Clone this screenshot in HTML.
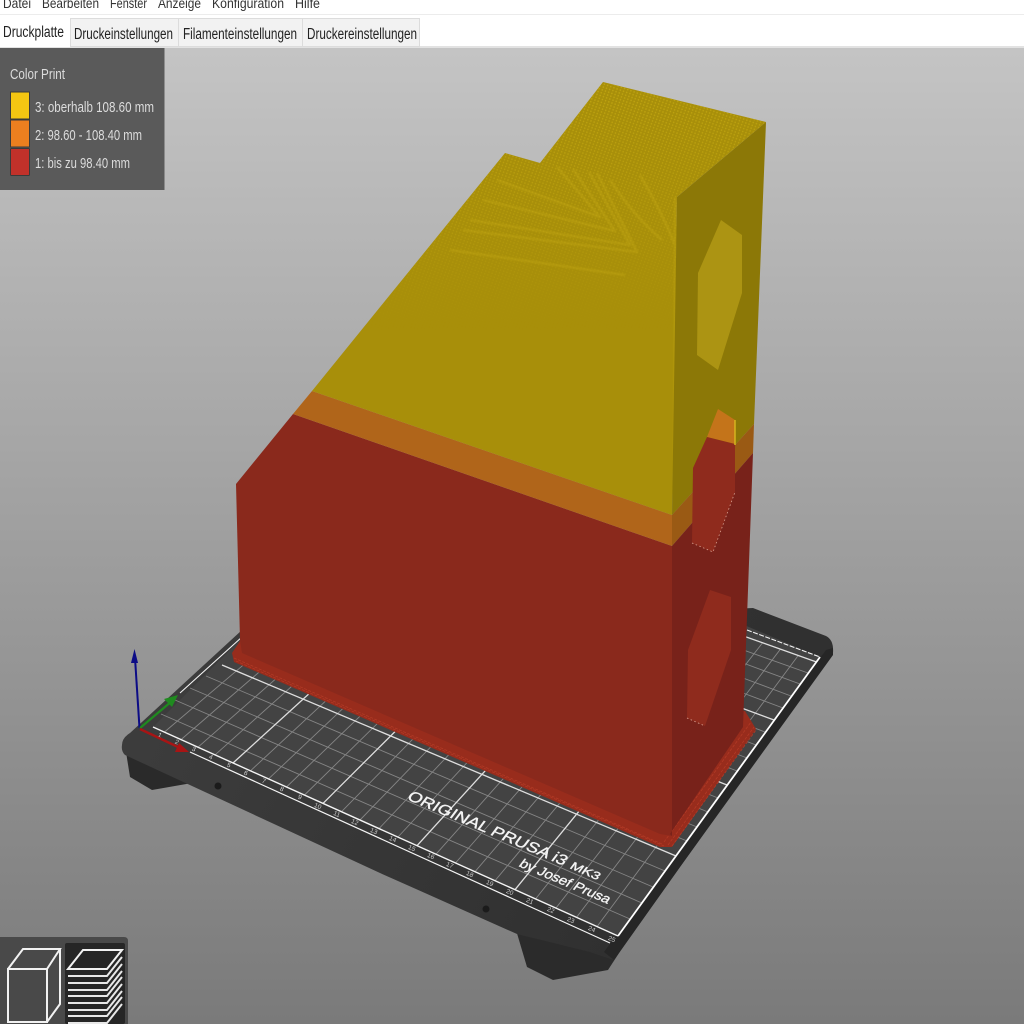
<!DOCTYPE html>
<html><head><meta charset="utf-8"><style>
html,body{margin:0;padding:0;width:1024px;height:1024px;overflow:hidden;background:#aaa}
svg{display:block;font-family:"Liberation Sans",sans-serif}
</style></head><body>
<svg width="1024" height="1024" viewBox="0 0 1024 1024" xmlns="http://www.w3.org/2000/svg">
<defs>
<linearGradient id="bg" x1="0" y1="48" x2="0" y2="1024" gradientUnits="userSpaceOnUse"><stop offset="0" stop-color="#c4c4c4"/><stop offset="1" stop-color="#7a7a7a"/></linearGradient>
<linearGradient id="plate" x1="140" y1="730" x2="620" y2="960" gradientUnits="userSpaceOnUse"><stop offset="0" stop-color="#3c3c3c"/><stop offset="1" stop-color="#303030"/></linearGradient>
<linearGradient id="fade" x1="0" y1="90" x2="0" y2="330" gradientUnits="userSpaceOnUse"><stop offset="0" stop-color="#fff"/><stop offset=".55" stop-color="#888"/><stop offset="1" stop-color="#000"/></linearGradient>
<mask id="fm" maskUnits="userSpaceOnUse" x="0" y="0" width="1024" height="1024"><rect width="1024" height="1024" fill="url(#fade)"/></mask>
<pattern id="dots" width="3.4" height="3" patternUnits="userSpaceOnUse" patternTransform="rotate(20)"><circle cx="1.7" cy="1.5" r=".85" fill="#c9ad12" opacity=".7"/></pattern>
<filter id="b" x="-10%" y="-10%" width="120%" height="120%"><feGaussianBlur stdDeviation=".9"/></filter>
</defs>
<rect width="1024" height="1024" fill="url(#bg)"/>

<!-- feet -->
<polygon points="126,752 130,777 152,790 192,783 200,770" fill="#2a2a2a"/>
<polygon points="516,930 527,967 553,980 608,970 630,936" fill="#2b2b2b"/>
<!-- plate -->
<path d="M122,745 Q122,738 130,733 L242,630 L753,608 L826,636 Q834,640 833,653 L680,867 L614,960 L590,952 L517,934 L380,873 L125,755 Q121,751 122,745Z" fill="url(#plate)"/>
<path d="M833,648 L833,655 L680,867 L614,960 L604,952 L675,855 L826,650Z" fill="#262626"/>
<polygon points="153,727 618,936 820,657 400,480" fill="#434343"/>

<!-- grid minor -->
<g stroke="#858585" stroke-width=".9" fill="none">
<path d="M164.5,732L344.5,579M181,739.6L361,584M198,747.2L378,589M215,754.9L395,594M250.5,770.8L430,604M268.5,778.9L448,609M286.5,787L466,614M304.5,795L484,619M341.5,811.7L521,629M360,820L540,634M379,828.6L559,638M398,837L578,643M436,854.2L616,652M455.5,863L635.5,657M475,871.7L655,661M495,880.7L675,665M535.5,899L744.6,636.7M556,908L762.4,643M576.5,917.4L780.3,649.3M597,926.6L798.2,655.5"/>
<path d="M161,714L630,919M175,700L642,903M190,688L653,887M206,676L665,871M238,655L687,841M300,664L697,827M400,687L708,812M500,710L718,798M600,717L737,771M650,720L747,758M680,716L756,745M700,707L765,732M735,690L783,708M735,675L791,696M735,660L800,684M735,647L808,673"/>
</g>
<!-- grid major -->
<g stroke="#dedede" stroke-width="1.3" fill="none">
<path d="M233,763L413,599M323,803.4L503,624M417,845.7L597,648M515,889.7L695,669"/>
<path d="M222,665L676,856M550,715L727,785M720,700L774,720M735,633L816.5,662"/>
</g>
<g stroke="#f4f4f4" fill="none">
<path d="M153,727L618,936" stroke-width="1.4"/>
<path d="M190,752L610,943" stroke-width="1.2"/>
<path d="M618,936L820,657" stroke-width="1.8" stroke="#fff"/>
<path d="M747,630L820,657" stroke-width="1.1" stroke-dasharray="5 1.5"/>
<path d="M180,693L242,637" stroke-width="1.1"/>
</g>
<!-- ruler labels -->
<g fill="#cfcfcf" font-size="6.5" text-anchor="middle">
<text transform="matrix(.92,.39,-.4,.9,159,737)">1</text>
<text transform="matrix(.92,.39,-.4,.9,176,744)">2</text>
<text transform="matrix(.92,.39,-.4,.9,193,751)">3</text>
<text transform="matrix(.92,.39,-.4,.9,210,759)">4</text>
<text transform="matrix(.92,.39,-.4,.9,228,767)">5</text>
<text transform="matrix(.92,.39,-.4,.9,245,775)">6</text>
<text transform="matrix(.92,.39,-.4,.9,263,783)">7</text>
<text transform="matrix(.92,.39,-.4,.9,281,791)">8</text>
<text transform="matrix(.92,.39,-.4,.9,299,799)">9</text>
<text transform="matrix(.92,.39,-.4,.9,317,808)">10</text>
<text transform="matrix(.92,.39,-.4,.9,336,816)">11</text>
<text transform="matrix(.92,.39,-.4,.9,354,824)">12</text>
<text transform="matrix(.92,.39,-.4,.9,373,833)">13</text>
<text transform="matrix(.92,.39,-.4,.9,392,841)">14</text>
<text transform="matrix(.92,.39,-.4,.9,411,850)">15</text>
<text transform="matrix(.92,.39,-.4,.9,430,858)">16</text>
<text transform="matrix(.92,.39,-.4,.9,449,867)">17</text>
<text transform="matrix(.92,.39,-.4,.9,469,876)">18</text>
<text transform="matrix(.92,.39,-.4,.9,489,885)">19</text>
<text transform="matrix(.92,.39,-.4,.9,509,894)">20</text>
<text transform="matrix(.92,.39,-.4,.9,529,903)">21</text>
<text transform="matrix(.92,.39,-.4,.9,550,912)">22</text>
<text transform="matrix(.92,.39,-.4,.9,570,922)">23</text>
<text transform="matrix(.92,.39,-.4,.9,591,931)">24</text>
<text transform="matrix(.92,.39,-.4,.9,611,941)">25</text>
</g>
<!-- logo text -->
<g fill="#f4f4f4" stroke="#f4f4f4" stroke-width=".35">
<text transform="matrix(.92,.39,-.6,.8,406,799)" font-size="15.5" textLength="171" lengthAdjust="spacingAndGlyphs">ORIGINAL PRUSA i3</text>
<text transform="matrix(.92,.39,-.6,.8,569,868)" font-size="11.5" textLength="31" lengthAdjust="spacingAndGlyphs">MK3</text>
<text transform="matrix(.92,.39,-.6,.8,518,866)" font-size="13.5" textLength="97" lengthAdjust="spacingAndGlyphs">by Josef Prusa</text>
</g>
<circle cx="218" cy="786" r="3.5" fill="#1b1b1b"/>
<circle cx="486" cy="909" r="3.5" fill="#1b1b1b"/>

<!-- axes -->
<path d="M139.5,728L135,658" stroke="#0c0c86" stroke-width="2" fill="none"/>
<polygon points="134.5,649 138,663 131,663" fill="#0c0c86"/>
<path d="M140,728L172,701" stroke="#1f8a1f" stroke-width="2.2" fill="none"/>
<polygon points="178,695 172,707 164,699" fill="#1f8a1f"/>
<path d="M140,729L178,747" stroke="#a81414" stroke-width="2.4" fill="none"/>
<polygon points="189,752 175,752 179,743" fill="#a81414"/>

<!-- brim -->
<polygon points="242,638 232,653 234,662 660,847 672,847 756,729 745,711" fill="#982c1c"/>
<g stroke="#b23a26" stroke-width=".8" fill="none" stroke-dasharray="3 1.5">
<path d="M234,658L662,844M236,661L664,846M668,845L754,727M664,842L751,722M672,846L756,730"/>
</g>

<!-- model: front -->
<polygon points="236,484 293,414 672,546 672,836 660,834 242,653 240,640" fill="#8a291c"/>
<polygon points="293,414 312,391 672,515 672,546" fill="#b0651a"/>
<polygon points="312,391 505,153 540,163 603,82 766,122 677,197 675,380 672,515" fill="#a88f0a"/>
<polygon points="505,153 540,163 603,82 766,122 677,197 675,340 400,340 312,391" fill="url(#dots)" mask="url(#fm)"/>
<!-- moire -->
<g fill="none" stroke="#c9ad14" stroke-width="2.6" opacity=".32" stroke-linejoin="round" filter="url(#b)">
<path d="M497,180L600,217L557,167"/>
<path d="M483,200L615,231L573,169"/>
<path d="M470,220L630,245L589,172"/>
<path d="M463,230L637,252L597,173"/>
<path d="M450,250L625,275"/>
<path d="M610,180C630,210 645,225 662,240"/>
<path d="M640,175C655,200 665,220 675,245"/>
<path d="M675,197L674,500" stroke-width="2"/>
</g>
<!-- model: side -->
<polygon points="677,197 766,122 754,424 672,515" fill="#8c7807"/>
<polygon points="672,515 754,424 753,453 672,546" fill="#9a5a14"/>
<polygon points="672,546 753,453 743,727 670,834 672,836" fill="#78221a"/>
<!-- holes -->
<polygon points="721,220 742,235 742,293 718,370 697,355 698,273" fill="#ac9413"/>
<polygon points="718,409 735,420 735,444 707,437" fill="#c4741a"/>
<polygon points="707,437 735,444 735,492 713,552 692,543 693,468" fill="#8f2b1d"/>
<polygon points="710,590 731,597 731,650 705,726 687,718 688,650" fill="#8f2b1d"/>
<path d="M735,420L735,445" stroke="#d9b820" stroke-width="1.4"/>
<path d="M692,543L713,552L735,492" stroke="#d8a090" stroke-width=".8" stroke-dasharray="1.5 2.5" fill="none"/>
<path d="M687,718L705,726" stroke="#d8a090" stroke-width=".8" stroke-dasharray="1.5 2.5" fill="none"/>

<!-- menu + tabs -->
<rect x="0" y="0" width="1024" height="15" fill="#fff"/>
<rect x="0" y="14" width="1024" height="1" fill="#ececec"/>
<g font-size="14" fill="#333">
<text x="3" y="8" textLength="28" lengthAdjust="spacingAndGlyphs">Datei</text>
<text x="42" y="8" textLength="57" lengthAdjust="spacingAndGlyphs">Bearbeiten</text>
<text x="110" y="8" textLength="37" lengthAdjust="spacingAndGlyphs">Fenster</text>
<text x="158" y="8" textLength="43" lengthAdjust="spacingAndGlyphs">Anzeige</text>
<text x="212" y="8" textLength="72" lengthAdjust="spacingAndGlyphs">Konfiguration</text>
<text x="295" y="8" textLength="25" lengthAdjust="spacingAndGlyphs">Hilfe</text>
</g>
<rect x="0" y="15" width="1024" height="33" fill="#fff"/>
<rect x="0" y="46" width="1024" height="2" fill="#e2e2e2"/>
<rect x="70.500" y="18.500" width="108" height="28" fill="#f2f2f2" stroke="#dcdcdc"/>
<rect x="178.500" y="18.500" width="124" height="28" fill="#f2f2f2" stroke="#dcdcdc"/>
<rect x="302.500" y="18.500" width="117" height="28" fill="#f2f2f2" stroke="#dcdcdc"/>
<rect x="0" y="16" width="70" height="31" fill="#fff"/>
<g font-size="15.500" fill="#222">
<text x="3" y="37" textLength="61" lengthAdjust="spacingAndGlyphs">Druckplatte</text>
<text x="74" y="39" textLength="99" lengthAdjust="spacingAndGlyphs">Druckeinstellungen</text>
<text x="183" y="39" textLength="114" lengthAdjust="spacingAndGlyphs">Filamenteinstellungen</text>
<text x="307" y="39" textLength="110" lengthAdjust="spacingAndGlyphs">Druckereinstellungen</text>
</g>

<!-- legend -->
<rect x="0" y="48" width="164.500" height="142" fill="#5a5a5a"/>
<g font-size="15" fill="#dcdcdc">
<text x="10" y="79" textLength="55" lengthAdjust="spacingAndGlyphs">Color Print</text>
<text x="35" y="112" textLength="119" lengthAdjust="spacingAndGlyphs">3: oberhalb 108.60 mm</text>
<text x="35" y="140" textLength="107" lengthAdjust="spacingAndGlyphs">2: 98.60 - 108.40 mm</text>
<text x="35" y="168" textLength="95" lengthAdjust="spacingAndGlyphs">1: bis zu 98.40 mm</text>
</g>
<rect x="10.500" y="92" width="19" height="27" fill="#f4c612" stroke="#3a3a3a"/>
<rect x="10.500" y="120" width="19" height="27" fill="#ec7f1f" stroke="#3a3a3a"/>
<rect x="10.500" y="148.500" width="19" height="27" rx="1" fill="#c1312a" stroke="#3a3a3a"/>

<!-- bottom toolbar -->
<path d="M0,937H124Q128,937 128,941V1024H0Z" fill="#494949"/>
<rect x="65" y="943" width="60" height="81" rx="2" fill="#262626"/>
<g fill="none" stroke="#f2f2f2" stroke-width="2">
<path d="M8,969H47V1022H8ZM8,969L23,949H60L47,969M60,949V1004L47,1022"/>
<path d="M68,969L83,950H122L107,969Z"/>
</g>
<g stroke="#e8e8e8" stroke-width="2" fill="none">
<path d="M68,976H107L122,957M68,983H107L122,964M68,990H107L122,971M68,996H107L122,977M68,1003H107L122,984M68,1010H107L122,991M68,1016H107L122,997M68,1023H107L122,1004"/>
</g>
</svg>
</body></html>
